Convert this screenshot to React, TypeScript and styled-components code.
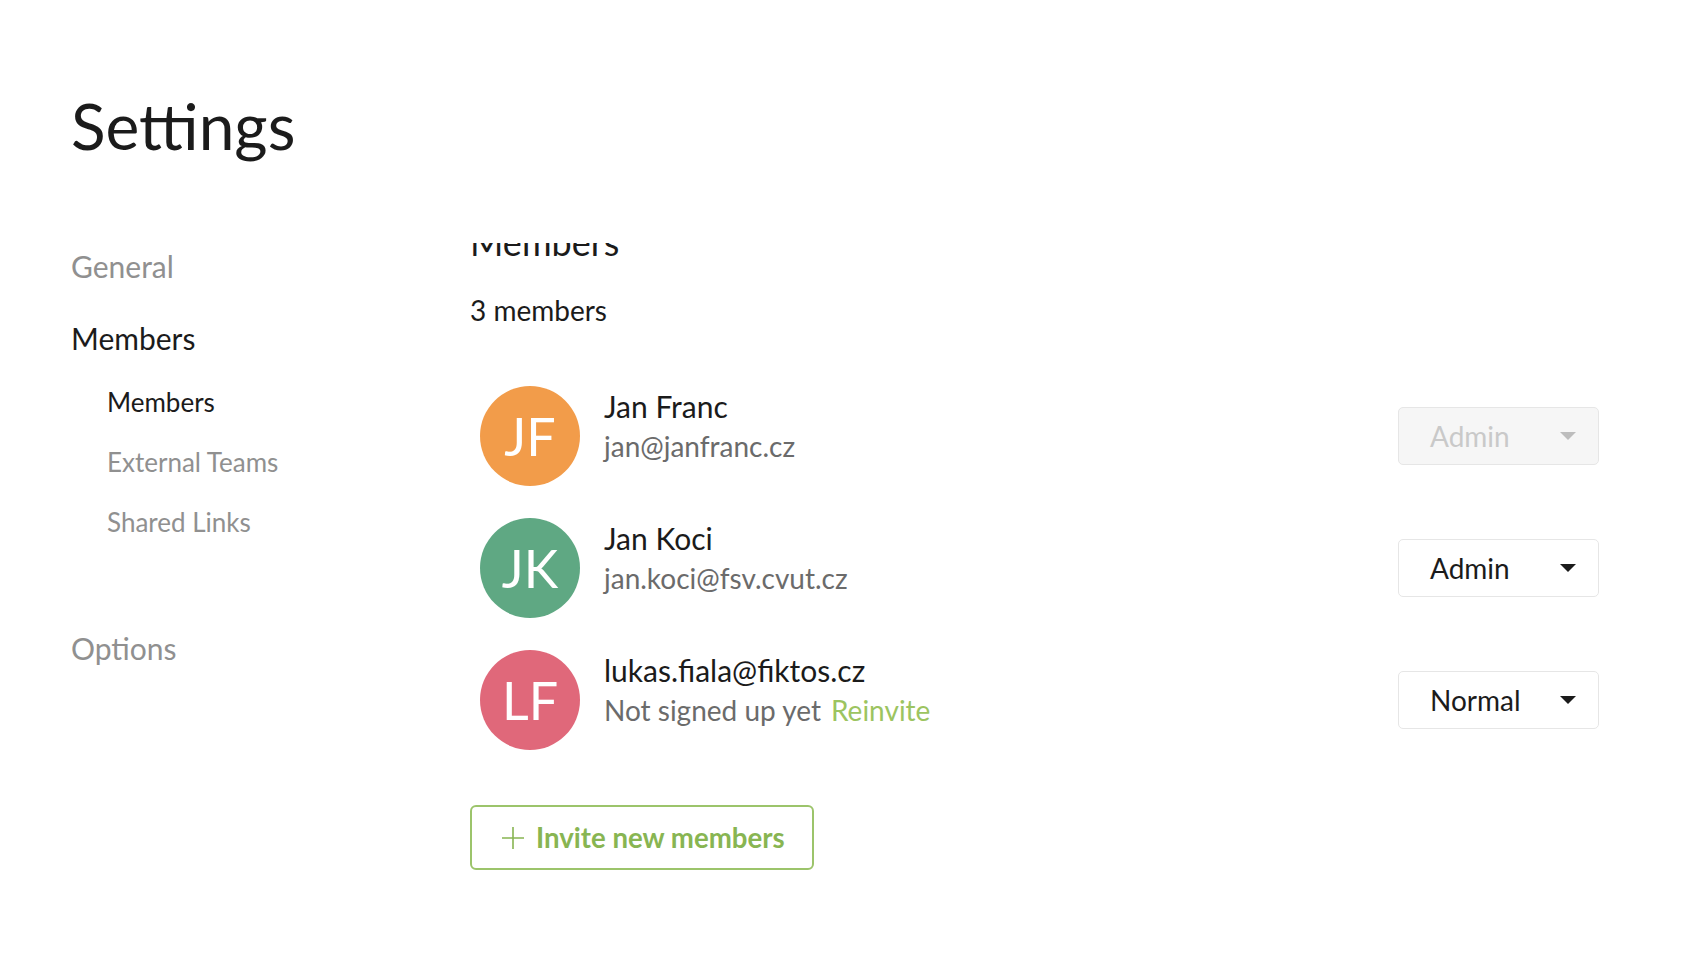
import React, { useLayoutEffect, useRef } from 'react';
import styled, { createGlobalStyle } from 'styled-components';

const GlobalStyle = createGlobalStyle`
  html, body {
    margin: 0;
    padding: 0;
    background: #fff;
  }
  body {
    font-family: Lato, "Open Sans", Arial, sans-serif;
    color: #1b1b1b;
    overflow: hidden;
  }
`;

const Page = styled.div`
  height: 966px;
  padding: 0 91px 0 71px;
  box-sizing: border-box;
  display: flex;
  flex-direction: column;
`;

const Title = styled.h1`
  margin: 88px 0 0;
  font-size: 64px;
  line-height: 76px;
  font-weight: 400;
  color: #1b1b1b;
`;

const Body = styled.div`
  display: flex;
  margin-top: 79px;
  flex: 1;
  min-height: 0;
`;

const Nav = styled.nav`
  width: 399px;
  flex-shrink: 0;
  padding-top: 6px;
  display: flex;
  flex-direction: column;
`;

const NavGroup = styled.div<{ $gap: number; $active?: boolean }>`
  margin-top: ${(p) => p.$gap}px;
  font-size: 30px;
  line-height: 34px;
  color: ${(p) => (p.$active ? '#1b1b1b' : '#909090')};
`;

const SubList = styled.div`
  display: flex;
  flex-direction: column;
  gap: 30px;
  margin-top: 32px;
  padding-left: 36px;
`;

const SubItem = styled.div<{ $active?: boolean }>`
  font-size: 26px;
  line-height: 30px;
  color: ${(p) => (p.$active ? '#1b1b1b' : '#909090')};
`;

const Content = styled.section`
  flex: 1;
  overflow-y: auto;
  scrollbar-width: none;
  &::-webkit-scrollbar {
    display: none;
  }
`;

const Inner = styled.div`
  padding: 40px 0 120px;
`;

const Heading = styled.h2`
  margin: 0;
  font-size: 36px;
  line-height: 40px;
  font-weight: 400;
  color: #1b1b1b;
`;

const Count = styled.div`
  margin-top: 33px;
  font-size: 28px;
  line-height: 30px;
  color: #1b1b1b;
`;

const MemberList = styled.div`
  margin-top: 61px;
  display: flex;
  flex-direction: column;
  gap: 32px;
`;

const Row = styled.div`
  display: flex;
  align-items: flex-start;
  padding-left: 10px;
  height: 100px;
`;

const Avatar = styled.div<{ $bg: string }>`
  width: 100px;
  height: 100px;
  border-radius: 50%;
  background: ${(p) => p.$bg};
  color: #fff;
  font-size: 52px;
  line-height: 1;
  display: flex;
  align-items: center;
  justify-content: center;
  flex-shrink: 0;
`;

const Info = styled.div`
  margin-left: 24px;
  padding-top: 3px;
  flex: 1;
`;

const Name = styled.div`
  font-size: 30px;
  line-height: 34px;
  color: #1b1b1b;
`;

const Sub = styled.div`
  margin-top: 7px;
  font-size: 28px;
  line-height: 32px;
  color: #6b6b6b;
  display: flex;
  gap: 10px;
`;

const Reinvite = styled.span`
  color: #9cc460;
`;

const Select = styled.div<{ $disabled?: boolean }>`
  align-self: center;
  width: 201px;
  height: 58px;
  box-sizing: border-box;
  border: 1px solid #e6e6e6;
  border-radius: 5px;
  background: ${(p) => (p.$disabled ? '#f6f6f6' : '#fff')};
  color: ${(p) => (p.$disabled ? '#c9c9c9' : '#1b1b1b')};
  display: flex;
  align-items: center;
  justify-content: space-between;
  padding: 0 22px 0 31px;
  font-size: 28px;
`;

const Caret = styled.svg`
  width: 16px;
  height: 8px;
  display: block;
`;

const InviteButton = styled.button`
  margin-top: 55px;
  width: 344px;
  height: 65px;
  box-sizing: border-box;
  border: 2px solid #9cc46b;
  border-radius: 6px;
  background: #fff;
  color: #88b552;
  font-family: inherit;
  font-size: 27.6px;
  font-weight: 700;
  display: flex;
  align-items: center;
  padding: 0 0 0 30px;
  gap: 12px;
  cursor: pointer;
`;

type Member = {
  initials: string;
  color: string;
  name: string;
  email?: string;
  pending?: boolean;
  role: string;
  disabled?: boolean;
};

const members: Member[] = [
  { initials: 'JF', color: '#f29c4a', name: 'Jan Franc', email: 'jan@janfranc.cz', role: 'Admin', disabled: true },
  { initials: 'JK', color: '#5fa883', name: 'Jan Koci', email: 'jan.koci@fsv.cvut.cz', role: 'Admin' },
  { initials: 'LF', color: '#e0687a', name: 'lukas.fiala@fiktos.cz', pending: true, role: 'Normal' },
];

const App: React.FC = () => {
  const scrollRef = useRef<HTMLElement>(null);

  // the members pane is scrolled a bit, its heading is cut off at the top
  useLayoutEffect(() => {
    if (scrollRef.current) scrollRef.current.scrollTop = 61;
  }, []);

  return (
    <>
      <GlobalStyle />
      <Page>
        <Title>Settings</Title>
        <Body>
          <Nav>
            <NavGroup $gap={0}>General</NavGroup>
            <NavGroup $gap={38} $active>
              Members
              <SubList>
                <SubItem $active>Members</SubItem>
                <SubItem>External Teams</SubItem>
                <SubItem>Shared Links</SubItem>
              </SubList>
            </NavGroup>
            <NavGroup $gap={94}>Options</NavGroup>
          </Nav>
          <Content ref={scrollRef}>
            <Inner>
              <Heading>Members</Heading>
              <Count>3 members</Count>
              <MemberList>
                {members.map((m) => (
                  <Row key={m.name}>
                    <Avatar $bg={m.color}>{m.initials}</Avatar>
                    <Info>
                      <Name>{m.name}</Name>
                      <Sub>
                        {m.pending ? (
                          <>
                            <span>Not signed up yet</span>
                            <Reinvite>Reinvite</Reinvite>
                          </>
                        ) : (
                          <span>{m.email}</span>
                        )}
                      </Sub>
                    </Info>
                    <Select $disabled={m.disabled}>
                      <span>{m.role}</span>
                      <Caret viewBox="0 0 16 8">
                        <path d="M0 0h16L8 8z" fill={m.disabled ? '#bdbdbd' : '#1b1b1b'} />
                      </Caret>
                    </Select>
                  </Row>
                ))}
              </MemberList>
              <InviteButton>
                <svg width="22" height="22" viewBox="0 0 22 22">
                  <path d="M11 0v22M0 11h22" stroke="#88b552" strokeWidth="1.6" />
                </svg>
                Invite new members
              </InviteButton>
            </Inner>
          </Content>
        </Body>
      </Page>
    </>
  );
};

export default App;
